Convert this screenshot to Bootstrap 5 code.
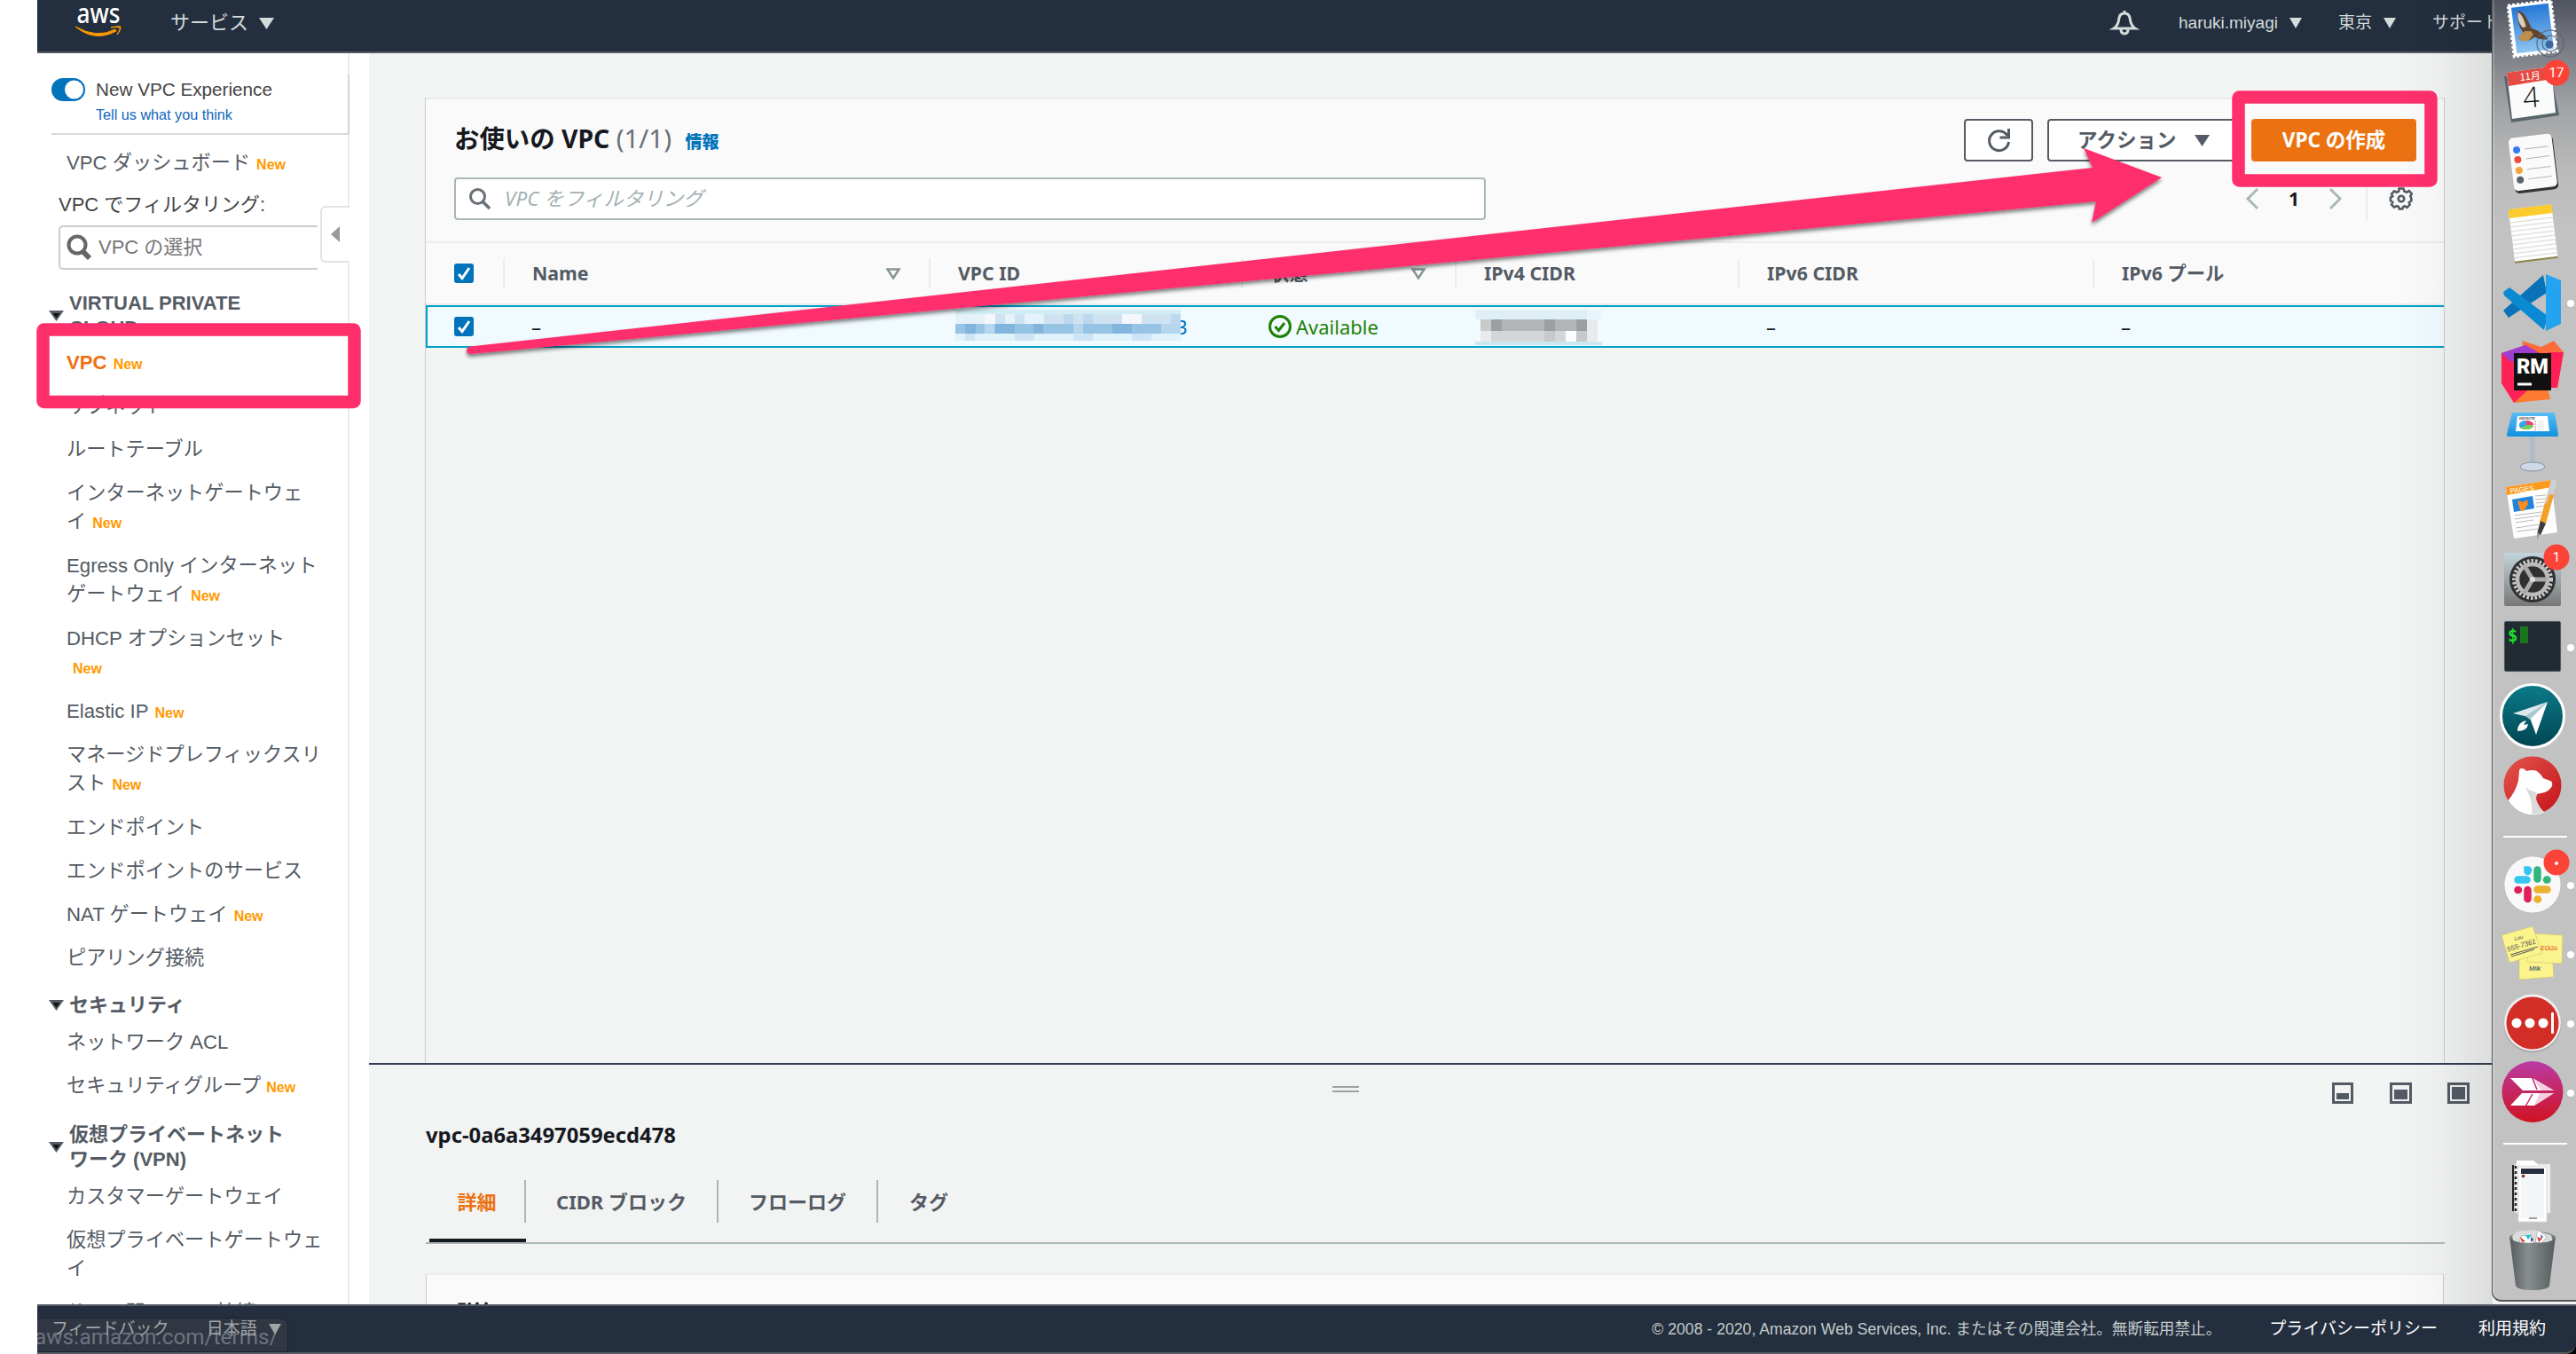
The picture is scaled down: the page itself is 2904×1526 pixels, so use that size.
<!DOCTYPE html>
<html lang="ja">
<head>
<meta charset="utf-8">
<title>VPC</title>
<link href="https://cdn.jsdelivr.net/npm/bootstrap@5.3.0/dist/css/bootstrap.min.css" rel="stylesheet">
<script src="https://cdn.jsdelivr.net/npm/bootstrap@5.3.0/dist/js/bootstrap.bundle.min.js"></script>
<style>
html,body{width:2904px;height:1526px;overflow:hidden;margin:0;background:#fff}
body{font-family:"Liberation Sans","Noto Sans CJK JP",sans-serif;font-size:22px;line-height:32px;color:#545b64;position:relative}
svg{display:block;flex:none;overflow:visible}
a{text-decoration:none;color:inherit}
.shell{height:1526px;padding-left:42px}
.topbar{height:60px;background:#232f3e;border-bottom:2px solid #545b64;color:#d5dbdb;padding:0 0 6px 44px;flex:none}
.topbar span{white-space:nowrap}
.side{width:374px;background:#fff;flex:none;overflow:hidden}
.side-in{width:352px;height:1410px;border-right:2px solid #eaeded;padding-left:13px;position:relative}
.exp{height:92px;margin-left:3px;border-bottom:2px solid #d9d9d9;padding-top:26px}
.exp-edge{position:absolute;right:-2px;top:24px;width:2px;height:68px;background:#d5d5d5}
.exp-name{font-size:20.7px;line-height:30px;color:#444}
.exp-link{font-size:16.2px;line-height:24px;color:#1166bb;padding-left:50px;margin-top:1px}
.exp svg{margin-right:12px}
.item{padding-left:20px;margin-bottom:17px;white-space:nowrap;font-size:22.2px}
.item.two{margin-bottom:18px}
.nw{font-size:16px;line-height:1;font-weight:700;color:#f90;margin-left:7px}
.nw.tight{margin-left:6px}
.item.on{color:#ec7211;font-weight:700}
.flt{padding-left:11px;color:#444;margin-top:15px}
.pick{margin:6.5px 0 0 11px;width:292px;height:50px;border:2px solid #ccc;border-right:0;border-radius:5px 0 0 5px;padding-left:7px;color:#757575;background:#fff}
.pick svg{margin-right:7px}
.handle{position:absolute;left:319px;top:172px;width:33px;height:64px;border:2px solid #e3e3e3;border-right:0;border-radius:6px 0 0 6px;background:#fff;padding-left:10px}
.grp{font-weight:700;line-height:28px;gap:6px;margin-bottom:12px}
.main{background:#f2f3f3;padding-left:63px;padding-right:148px;font-family:"Noto Sans","Noto Sans CJK JP",sans-serif}
.listpane{height:1088px;margin-top:50px;border:solid #c9cdcd;border-width:0 1px;flex:none}
.phead{background:#fafafa;border-top:2px solid #eaeded;border-bottom:2px solid #eaeded;height:164px;padding:22px 31px 0 32px}
.ttl{font-size:28.4px;font-weight:700;color:#16191f}
.ttl i{font-style:normal;font-weight:400;color:#687078;font-size:29.5px}
.ttl b{font-size:19px;color:#0073bb;margin-left:8px}
.bt{height:48px;border:2px solid #545b64;border-radius:4px;background:#fff;font-weight:700;padding:0}
.bt.re{width:78px;margin-right:16px}
.bt.ac{width:215px;padding-left:32px;margin-right:15px}
.bt.go{width:186px;background:#ec7211;border-color:#ec7211;color:#fff}
.find{width:1163px;height:48px;border:2px solid #aab7b8;border-radius:4px;background:#fff;font-style:italic;color:#a3b1b3;padding-left:15px;font-size:22.5px}
.find svg{margin-right:16px}
.vgrid{table-layout:fixed;border-collapse:separate;border-spacing:0;width:100%}
.vgrid th{height:70px;padding:0;background:#fafafa;border-bottom:2px solid #eaeded;color:#545b64;vertical-align:middle;font-size:21.3px}
.vgrid th>div{height:34px;border-left:2px solid #eaeded;padding-left:31px}
.vgrid th:first-child>div{border:0;padding-left:32px}
.vgrid td{height:48px;padding:0 0 1px 32px;background:#f1faff;border:solid #00a1c9;border-width:2px 0;vertical-align:middle;color:#16191f}
.vgrid td:first-child{border-left-width:2px;padding-left:30px}
.split{margin:0 -148px 0 -63px;border-top:2px solid #333f50;padding:0 148px 0 64px;height:272px;overflow:hidden;flex:none;position:relative}
.grip{width:30px;height:7px;border:solid #9aa2a6;border-width:2px 0;margin:24px 0 0 1022px}
.sizes{position:absolute;left:2213px;top:20px;gap:40px}
.vid{font-size:23.8px;font-weight:700;color:#16191f;margin-top:32px}
.tabbar{height:74px;margin-top:33px;border-bottom:2px solid #aab7b8;padding-left:4px;font-weight:700;width:2276px}
.tabbar .tb{height:72px;border-bottom:4px solid transparent}
.tabbar .tb>div{height:48px;display:flex;align-items:center;justify-content:center;border-right:2px solid #aab7b8;margin-top:2px;padding-bottom:1px}
.tabbar .tb.on{color:#ec7211;border-bottom-color:#16191f}
.tabbar .tb:last-child>div{border:0}
.dcard{margin:33px 0 0 0;width:2275px;height:100px;background:#fafafa;border:1px solid #c9cdcd;border-top:2px solid #eaeded;padding:24px 33px;font-size:28px;line-height:40px;font-weight:700;color:#16191f}
.foot{height:56px;background:#232f3e;border:solid #545b64;border-width:2px 0;color:#fff;flex:none;position:relative;border-radius:0 0 12px 0;font-size:19px;padding-left:16px}
.foot>span,.foot>svg{position:relative;z-index:1}
.corner{position:absolute;right:0;bottom:0;width:14px;height:14px;background:#000}
.stat{position:absolute;left:0;top:13px;width:283px;height:39px;background:rgba(58,60,72,.6);border:1px solid #1b2431;border-left:0;border-radius:0 9px 0 0;overflow:hidden;color:#6d7480;font-size:24.3px;line-height:42px;white-space:nowrap;font-family:Roboto,sans-serif}
.stat span{margin-left:-3px}
.dshade{position:absolute;left:2700px;top:0;width:110px;height:1470px;background:linear-gradient(90deg,rgba(0,0,0,0),rgba(0,0,0,.02) 40%,rgba(0,0,0,.09))}
.dockbar{position:absolute;left:2809px;top:0;width:95px;height:1467px;border:1px solid #55595b;border-width:0 0 2px 1px;border-radius:0 0 0 11px;background:linear-gradient(#50545f,#7d8087 60px,#a2a4a6 125px,#bababa 190px,#c2c2c2 260px);box-shadow:inset 2px 0 0 rgba(255,255,255,.18)}
.under{position:absolute;left:2819px;top:1467px;width:85px;height:3px;background:#f4f4f4}
.anno{position:absolute;left:0;top:0;pointer-events:none}
</style>
</head>
<body>
<svg width="0" height="0" class="position-absolute"><defs>
<g id="ck"><rect width="22" height="22" rx="3" fill="#0073bb"/><path d="M5 12l4 4.500 8-11.500" fill="none" stroke="#fff" stroke-width="3"/></g>
<g id="fold"><path d="M0 0h17l-8.500 12z" fill="#545b64"/><path d="M4.500 3h8l-4 5.500z" fill="#111"/></g>
<linearGradient id="gs" x2="0" y2="1"><stop stop-color="#b93ba5"/><stop offset="1" stop-color="#d0121f"/></linearGradient>
<linearGradient id="gp" x2="0" y2="1"><stop stop-color="#0b7c89"/><stop offset="1" stop-color="#024451"/></linearGradient>
<linearGradient id="gb" x2="1" y2="1"><stop stop-color="#e4544b"/><stop offset="1" stop-color="#c4131b"/></linearGradient>
<linearGradient id="gy" x2="0" y2="1"><stop stop-color="#2477d6"/><stop offset="1" stop-color="#8fc4ef"/></linearGradient>
<linearGradient id="gt"><stop stop-color="#555a5c"/><stop offset=".4" stop-color="#888f91"/><stop offset="1" stop-color="#565b5d"/></linearGradient>
<linearGradient id="gr" x2="0" y2="1"><stop stop-color="#c3d5dd"/><stop offset="1" stop-color="#777"/></linearGradient>
<linearGradient id="gk" x2="0" y2="1"><stop stop-color="#58bdf5"/><stop offset="1" stop-color="#1390dd"/></linearGradient>
<filter id="sh" x="-10%" y="-10%" width="120%" height="130%"><feDropShadow dx="0" dy="3" stdDeviation="2" flood-opacity=".5"/></filter>
</defs></svg>

<div class="shell d-flex flex-column">
  <header class="topbar d-flex align-items-center">
    <svg width="52" height="38" viewBox="86 8 52 38"><text x="86.500" y="27" font-family="Noto Sans" font-weight="500" font-size="30" textLength="49" lengthAdjust="spacingAndGlyphs" fill="#fff">aws</text><path d="M85 31q24 14 45 3l1 2q-24 13-46-5z" fill="#f90" stroke="#f90"/><path d="M125 32q9-2 11-1q0 5-4 9q4-7 3-8q-3-1-10 0z" fill="#f90" stroke="#f90"/></svg>
    <span style="margin-left:54px">サービス</span>
    <svg width="17" height="13" style="margin-left:12px"><path d="M0 0h17l-8.500 13z" fill="#d5dbdb"/></svg>
    <svg width="28" height="28" viewBox="0 0 28 28" style="margin-left:2072px"><path d="M2 20q5-3 6-12q1-5 6-5t6 5q1 9 6 12zM14 0v3M10 21q0 5 4 5t4-5" fill="none" stroke="#d5dbdb" stroke-width="3"/></svg>
    <span style="margin-left:47px;font-size:19px">haruki.miyagi</span>
    <svg style="margin-left:13px" width="14" height="12"><path d="M0 0h14l-7 12z" fill="#d5dbdb"/></svg>
    <span style="margin-left:41px;font-size:19px">東京</span>
    <svg style="margin-left:13px" width="14" height="12"><path d="M0 0h14l-7 12z" fill="#d5dbdb"/></svg>
    <span style="margin-left:41px;font-size:19px">サポート</span>
  </header>

  <div class="d-flex flex-grow-1" style="height:1410px">
    <nav class="side"><div class="side-in">
      <div class="exp"><div class="d-flex align-items-center exp-name"><svg width="38" height="26" viewBox="0 0 38 26"><rect width="38" height="26" rx="13" fill="#0073bb"/><circle cx="25.500" cy="13" r="10.500" fill="#fff"/></svg>New VPC Experience</div><div class="exp-link">Tell us what you think</div></div>
      <div class="exp-edge"></div>
      <div class="item" style="margin:16px 0 0">VPC ダッシュボード<span class="nw">New</span></div>
      <div class="flt">VPC でフィルタリング:</div>
      <div class="pick d-flex align-items-center"><svg width="29" height="30" viewBox="0 0 29 30"><circle cx="12" cy="12" r="9.500" fill="none" stroke="#666" stroke-width="4"/><path d="M18 19l8 8" stroke="#666" stroke-width="6"/></svg>VPC の選択</div>
      <div class="handle d-flex align-items-center"><svg width="10" height="18"><path d="M10 0v18l-10-9z" fill="#999"/></svg></div>

      <div class="grp d-flex align-items-center" style="margin-top:24px;margin-bottom:9px"><svg width="17" height="12"><use href="#fold"/></svg><div>VIRTUAL PRIVATE<br>CLOUD</div></div>
      <div class="item on">VPC<span class="nw">New</span></div>
      <div class="item">サブネット</div>
      <div class="item">ルートテーブル</div>
      <div class="item two">インターネットゲートウェ<br>イ<span class="nw">New</span></div>
      <div class="item two">Egress Only インターネット<br>ゲートウェイ<span class="nw">New</span></div>
      <div class="item two">DHCP オプションセット<br><span class="nw">New</span></div>
      <div class="item">Elastic IP<span class="nw">New</span></div>
      <div class="item two">マネージドプレフィックスリ<br>スト<span class="nw">New</span></div>
      <div class="item">エンドポイント</div>
      <div class="item">エンドポイントのサービス</div>
      <div class="item">NAT ゲートウェイ<span class="nw">New</span></div>
      <div class="item">ピアリング接続</div>
      <div class="grp d-flex align-items-center" style="margin-top:23px"><svg width="17" height="12"><use href="#fold"/></svg><div>セキュリティ</div></div>
      <div class="item">ネットワーク ACL</div>
      <div class="item">セキュリティグループ<span class="nw tight">New</span></div>
      <div class="grp d-flex align-items-center" style="margin-top:25px"><svg width="17" height="12"><use href="#fold"/></svg><div>仮想プライベートネット<br>ワーク (VPN)</div></div>
      <div class="item">カスタマーゲートウェイ</div>
      <div class="item two">仮想プライベートゲートウェ<br>イ</div>
      <div class="item">サイト間の VPN 接続</div>
    </div></nav>

    <main class="main flex-grow-1 d-flex flex-column">
      <section class="listpane">
        <div class="phead">
          <div class="d-flex align-items-center justify-content-between">
            <div class="ttl">お使いの VPC <i>(1/1)</i> <b>情報</b></div>
            <div class="d-flex">
              <button class="btn bt re d-flex align-items-center justify-content-center"><svg width="26" height="26" viewBox="0 0 26 26"><path d="M23 8a11 11 0 1 0 1.500 7" fill="none" stroke="#545b64" stroke-width="3"/><path d="M24.500 0v10h-10" fill="none" stroke="#545b64" stroke-width="3"/></svg></button>
              <button class="btn bt ac d-flex align-items-center"><span style="color:#545b64;font-size:22.500px">アクション</span><svg style="margin-left:21px" width="17" height="13"><path d="M0 0h17l-8.500 13z" fill="#545b64"/></svg></button>
              <button class="btn bt go"><span style="font-size:22.500px">VPC の作成</span></button>
            </div>
          </div>
          <div class="d-flex align-items-center justify-content-between" style="margin-top:18px">
            <div class="find d-flex align-items-center"><svg width="24" height="24" viewBox="0 0 24 24"><circle cx="9.500" cy="9.500" r="8" fill="none" stroke="#687078" stroke-width="3"/><path d="M15.500 15.500l7.500 7.500" stroke="#687078" stroke-width="3.500"/></svg>VPC をフィルタリング</div>
            <div class="d-flex align-items-center" style="margin-right:4px;color:#16191f;font-weight:700;font-size:21px">
              <svg width="14" height="24"><path d="M13 1l-11 11 11 11" fill="none" stroke="#aab7b8" stroke-width="3"/></svg><span style="margin:0 34px">1</span><svg width="14" height="24"><path d="M1 1l11 11-11 11" fill="none" stroke="#aab7b8" stroke-width="3"/></svg>
              <div style="width:2px;height:48px;background:#eaeded;margin:0 25px 0 27px"></div>
              <svg width="26" height="26" viewBox="-13 -13 26 26"><path d="M-2.500-11.500h5l.8 3 2.800 1.200 2.700-1.500 3 3.200-1.500 2.700 1 2.400v3l-2.500 1.500.8 2.600-3 3.200-2.700-1.500-1.800.8-.8 2.400h-3.500l-.8-2.400-2.300-.9-2.700 1.500-3-3.200 1.300-2.600-2.400-1.700v-3.500l2.400-1.500-1.300-2.600 3-3.300 2.700 1.400 2.500-1z" fill="none" stroke="#545b64" stroke-width="2.600"/><circle r="3.300" fill="none" stroke="#545b64" stroke-width="2.600"/></svg>
            </div>
          </div>
        </div>
        <table class="vgrid">
          <colgroup><col style="width:87px"><col style="width:480px"><col style="width:352px"><col style="width:241px"><col style="width:319px"><col style="width:400px"><col></colgroup>
          <thead><tr>
            <th><div class="d-flex align-items-center"><svg width="22" height="22"><use href="#ck"/></svg></div></th>
            <th><div class="d-flex align-items-center justify-content-between"><span>Name</span><svg width="16" height="13" style="margin-right:32px"><path d="M1.500 1.500h13l-6.500 10z" fill="none" stroke="#879596" stroke-width="2.500"/></svg></div></th>
            <th><div class="d-flex align-items-center justify-content-between"><span>VPC ID</span><svg width="16" height="13" style="margin-right:32px"><path d="M1.500 1.500h13l-6.500 10z" fill="none" stroke="#879596" stroke-width="2.500"/></svg></div></th>
            <th><div class="d-flex align-items-center justify-content-between"><span>状態</span><svg width="16" height="13" style="margin-right:33px"><path d="M1.500 1.500h13l-6.500 10z" fill="none" stroke="#879596" stroke-width="2.500"/></svg></div></th>
            <th><div class="d-flex align-items-center">IPv4 CIDR</div></th>
            <th><div class="d-flex align-items-center">IPv6 CIDR</div></th>
            <th><div class="d-flex align-items-center">IPv6 プール</div></th>
          </tr></thead>
          <tbody><tr>
            <td><svg width="22" height="22"><use href="#ck"/></svg></td>
            <td>–</td>
            <td><div class="position-relative" style="height:32px;margin-left:-2px"><span class="position-absolute" style="left:249px;color:#0073bb">3</span>
              <svg class="position-absolute" style="left:0;top:-3px" width="254" height="36" shape-rendering="crispEdges"><path fill="#d0edf4" d="M0 0h254v5H0z"/><path fill="#e6f2fa" d="M0 5h254v11H0z"/><path fill="#cfe2f2" d="M45 5h11v11H45zM67 5h11v11H67zM100 5h88v11h-88zM210 5h44v11h-44z"/><path fill="#bcd8ee" d="M122 5h11v11h-11zM144 5h11v11h-11zM243 5h11v11h-11z"/><path fill="#f4f8fd" d="M188 5h22v11h-22zM33 5h12v11H33z"/><path fill="#97c3e4" d="M0 16h254v11H0z"/><path fill="#82b5dd" d="M11 16h12v11H11zM45 16h22v11H45zM88 16h11v11H88zM177 16h22v11h-22z"/><path fill="#b5d6ec" d="M33 16h11v11H33zM133 16h11v11h-11zM232 16h22v11h-22z"/><path fill="#e0f2fa" d="M0 27h254v8H0z"/><path fill="#cde4f4" d="M11 27h11v8H11zM67 27h22v8H67zM133 27h22v8h-22zM199 27h22v8h-22z"/></svg></div></td>
            <td><div class="d-flex align-items-center" style="color:#1d8102;margin-left:-1px"><svg width="26" height="26" viewBox="0 0 26 26" style="margin-right:5px"><circle cx="13" cy="13" r="11.500" fill="none" stroke="#1d8102" stroke-width="3"/><path d="M7.500 13l4 4.500 6.500-8.500" fill="none" stroke="#1d8102" stroke-width="3"/></svg>Available</div></td>
            <td><svg width="143" height="40" style="margin-left:-9px;margin-top:2px" shape-rendering="crispEdges"><path fill="#dff0f5" d="M0 0h126v11H0z"/><path fill="#e6f6fc" d="M126 0h17v11h-17z"/><path fill="#fafcfd" d="M6 11h132v25H6z"/><path fill="#b3b4b8" d="M6 11h120v13H6z"/><path fill="#9b9ea3" d="M18 11h12v13H18zM78 11h12v13H78zM114 11h12v13h-12z"/><path fill="#c8c9cb" d="M6 11h12v13H6z"/><path fill="#d4d6da" d="M18 24h84v12H18z"/><path fill="#c6c8cd" d="M78 24h12v12H78zM114 24h12v12h-12z"/><path fill="#e8ebee" d="M6 24h12v12H6zM126 11h12v25h-12z"/><path fill="#cbe8f1" d="M0 36h143v4H0z"/></svg></td>
            <td>–</td><td>–</td>
          </tr></tbody>
        </table>
      </section>
      <section class="split">
        <div class="grip"></div>
        <div class="sizes d-flex position-absolute">
          <svg width="25" height="24"><path d="M1.500 1.500h21v21h-21z" fill="none" stroke="#545b64" stroke-width="3"/><path d="M5 12h14v7H5z" fill="#545b64"/></svg>
          <svg width="25" height="24"><path d="M1.500 1.500h22v21h-22z" fill="none" stroke="#545b64" stroke-width="3"/><path d="M5 8h15v11H5z" fill="#545b64"/></svg>
          <svg width="25" height="24"><path d="M1.500 1.500h22v21h-22z" fill="none" stroke="#545b64" stroke-width="3"/><path d="M5 5h15v14H5z" fill="#545b64"/></svg>
        </div>
        <div class="vid">vpc-0a6a3497059ecd478</div>
        <div class="tabbar d-flex">
          <div class="tb on" style="width:109px"><div>詳細</div></div>
          <div class="tb" style="width:217px"><div>CIDR ブロック</div></div>
          <div class="tb" style="width:180px"><div>フローログ</div></div>
          <div class="tb" style="width:114px"><div>タグ</div></div>
        </div>
        <div class="dcard">詳細</div>
      </section>
    </main>
  </div>

  <div class="position-relative"><div class="corner"></div>
  <footer class="foot d-flex align-items-center">
    <span style="color:#a0a5a6">フィードバック</span><span style="margin-left:42px;color:#a0a5a6">日本語</span><svg style="margin-left:13px" width="14" height="12"><path d="M0 0h14l-7 12z" fill="#a0a5a6"/></svg>
    <span class="ms-auto" style="color:#c3caca;font-size:17.650px">© 2008 - 2020, Amazon Web Services, Inc. またはその関連会社。無断転用禁止。</span>
    <span style="margin-left:54px">プライバシーポリシー</span><span style="margin:0 34px 0 46px">利用規約</span>
    <div class="stat"><span>aws.amazon.com/terms/</span></div>
  </footer></div>
</div>

<svg class="anno" width="2904" height="1526" viewBox="0 0 2904 1526">
  <path filter="url(#sh)" d="M530 390.500L2359 189l-10-22 88 33-79 51 5-24L531 399q-5 0-5-4t4-4.500z" fill="#ff2f6c"/>
  <rect x="48.500" y="371.500" width="351" height="81.500" rx="1" fill="none" stroke="#ff2f6c" stroke-width="14.500" stroke-linejoin="round"/>
  <rect x="2523.500" y="109.500" width="217" height="94" rx="1" fill="none" stroke="#ff2f6c" stroke-width="14.500" stroke-linejoin="round"/>
</svg>
<div class="dshade"></div>
<div class="under"></div>
<aside class="dockbar d-flex flex-column">
  <svg width="94" height="68" viewBox="0 0 94 68"><g transform="rotate(-7 45 32)"><rect x="20.500" y="3" width="49" height="58" fill="#fff" stroke="#fff" stroke-width="3" stroke-dasharray="3 2"/><rect x="24" y="6" width="42" height="52" fill="url(#gy)"/><path d="M31 10q7 3 10 13l3 9q10 4 17 14-8 1-15-4l-6 3-9-1-3-3 6-5q-7-14-3-26z" fill="#5f4630"/><path d="M31 12q5 3 7 17l-4 1q-6-9-3-18z" fill="#d6cdc0"/><path d="M28 40l8-6 7 1 2 4-6 6-8 0z" fill="#c08f50"/></g><circle cx="65" cy="49" r="15" fill="none" stroke="#56657c" stroke-width="1.500" opacity=".75"/><circle cx="65" cy="49" r="9" fill="none" stroke="#56657c" stroke-width="1.500" opacity=".75"/><circle cx="64" cy="50" r="4.500" fill="#2d5285" opacity=".8"/></svg>
  <svg width="94" height="77" viewBox="0 68 94 77"><path d="M13 86l52-6 10 50-54 8z" fill="#58656c"/><path d="M16 82l50-7 5 52-49 7z" fill="#fbfbfb"/><path d="M16 82l50-7 1 14-49 8z" fill="#e44b45"/><text x="31" y="91" font-family="Noto Sans CJK JP" font-size="11" fill="#fff" transform="rotate(-6 31 91)">11月</text><text x="35" y="121.500" font-family="Open Sans" font-weight="300" font-size="32" fill="#111" transform="rotate(-4 35 121)">4</text><circle cx="72" cy="82" r="14.500" fill="#fc4338"/><text x="72" y="87" text-anchor="middle" font-family="Roboto" font-size="15" fill="#fff">17</text></svg>
  <svg width="94" height="78" viewBox="0 145 94 78"><g transform="rotate(-7 45 184)"><rect x="22" y="155" width="49" height="61" rx="5" fill="#333"/><rect x="21" y="153" width="49" height="60" rx="5" fill="#fafafa"/><g stroke="#b5b5b5"><path d="M38 167h27M38 178h27M38 190h27M38 201h27"/></g><circle cx="29" cy="167" r="4" fill="#3478f6"/><circle cx="29" cy="178" r="4" fill="#eb4d3d"/><circle cx="29" cy="190" r="4" fill="#f2a33c"/><circle cx="29" cy="201" r="4" fill="#5b626a"/></g></svg>
  <svg width="94" height="79" viewBox="0 223 94 79"><g transform="rotate(-7 45 262)"><rect x="21" y="233" width="49" height="61" fill="#8f8348"/><rect x="21" y="233" width="49" height="59" fill="#fdfdfd"/><rect x="21" y="233" width="49" height="10" fill="#fccb2e"/><path d="M21 248h49M21 253h49M21 258h49M21 263h49M21 268h49M21 273h49M21 278h49M21 283h49M21 288h49" stroke="#d6d6d6"/></g></svg>
  <svg width="94" height="78" viewBox="0 302 94 78"><path d="M12 350l45-40 4 20-43 28z" fill="#0a72b8"/><path d="M12 329l7-5 43 32-4 16L13 333z" fill="#0b8ad4"/><path d="M60 309l17 7v49l-17 8z" fill="#24a3f0"/></svg>
  <svg width="94" height="79" viewBox="0 380 94 79"><path d="M33 384l22 7 14-7 11 13-7 40H45z" fill="#fc6b3a"/><path d="M10 398l27-9 20 11-12 45-21 9-14-22z" fill="#ff2157"/><path d="M10 398l27-9 15 9-31 10z" fill="#9c3fd0"/><path d="M24 454l20-18 18 0 3 14z" fill="#fd7b31"/><path d="M80 397l-7 40h-9l-2-40z" fill="#ff1f55"/><rect x="24" y="398" width="42" height="42" fill="#111"/><text x="27" y="421" font-family="Roboto" font-weight="900" font-size="24" textLength="36" lengthAdjust="spacingAndGlyphs" fill="#fff">RM</text><path d="M28 433h16" stroke="#fff" stroke-width="3"/></svg>
  <svg width="94" height="77" viewBox="0 459 94 77"><path d="M42 492h6v36h-6z" fill="#aebdc9"/><ellipse cx="45" cy="526" rx="14" ry="5" fill="#cdd9e4" stroke="#8495a5"/><path d="M22 465h48l4 24-.5 3h-57l-.5-3z" fill="url(#gk)"/><path d="M28 469h34l2 17H26z" fill="#fff"/><text x="30" y="473" font-size="4" font-weight="700" fill="#555" font-family="Liberation Sans" textLength="18">KEYNOTE</text><ellipse cx="38" cy="479" rx="8" ry="5" fill="#9b4fd0"/><path d="M38 479v-5q8 1 8 5z" fill="#f0416b"/><path d="M38 479h8q-1 5-8 5-5 0-7-2z" fill="#6fd35a"/><path d="M38 479v-5q-8 1-8 5 0 2 1 3z" fill="#29a9ee"/><path d="M48 474v11" stroke="#e96d8d" stroke-dasharray="2 1"/><path d="M51 475h7M51 478h7M51 481h7M51 484h7" stroke="#ddd"/></svg>
  <svg width="94" height="76" viewBox="0 536 94 76"><path d="M15 549l51-8 7 59-49 7z" fill="#fdfdfd"/><path d="M15 549l51-8 1 8-51 9z" fill="#fb9a1e"/><text x="20" y="556" font-size="8" font-family="Liberation Sans" fill="#fff" transform="rotate(-7 20 556)">PAGES</text><path d="M22 563l23-4 2 14-23 4z" fill="#1f84dc"/><path d="M28 564l6 2 5-3 1 5-5 8-4-1z" fill="#fb8b1c"/><path d="M48 559l12-1M48 563l12-1M49 567l11-1M49 571l10-1M25 581l30-4M25 585l29-4M26 589l20-3M26 595l27-4M27 599l24-3" stroke="#bbb"/><path d="M66 541q5-1 7 2L60 590l-7-2z" fill="#f3a127"/><path d="M66 541q5-1 7 2l-8 26-6-2z" fill="#c9d2da"/><path d="M69 558l-10 31-5-1 10-31z" fill="#f3a127"/><path d="M54 587l6 3-6 13-4-1z" fill="#3d3d3d"/><path d="M50 600l3 1-3 8z" fill="#8aa0b5"/></svg>
  <svg width="94" height="80" viewBox="0 612 94 80"><rect x="13" y="623" width="64" height="60" rx="2" fill="url(#gr)"/><circle cx="45" cy="653" r="26" fill="#303030"/><circle cx="45" cy="653" r="20.500" fill="none" stroke="#c9c9c9" stroke-width="5" stroke-dasharray="2.500 2"/><circle cx="45" cy="653" r="17" fill="none" stroke="#bbb" stroke-width="4.500"/><path d="M45 653h17M45 653l-9-15M45 653l-9 15" stroke="#a9a9a9" stroke-width="5"/><circle cx="45" cy="653" r="3" fill="#ddd"/><circle cx="72" cy="628" r="14.500" fill="#fc4338"/><text x="72" y="633" text-anchor="middle" font-family="Roboto" font-size="15" fill="#fff">1</text></svg>
  <svg width="94" height="76" viewBox="0 692 94 76"><rect x="13" y="700" width="64" height="57" rx="2" fill="#222b31" stroke="#9db3c0" stroke-width=".7"/><text x="17" y="723" font-family="DejaVu Sans Mono" font-size="19" font-weight="700" fill="#17e32a">$</text><rect x="31" y="706" width="9" height="19" fill="#19761f"/></svg>
  <svg width="94" height="78" viewBox="0 768 94 78"><circle cx="45" cy="807" r="35.500" fill="url(#gp)" stroke="#fff" stroke-width="3"/><path d="M23 804l39-13-20 17-6-1z" fill="#dce9ec"/><path d="M62 791l-13 37-7-19z" fill="#fff"/><path d="M62 791l-25 16 5 4z" fill="#a5c7cd"/><path d="M28 824q0-10 10-12l-3 5 5-1q-1 8-12 8z" fill="#fff"/></svg>
  <svg width="94" height="78" viewBox="0 846 94 78"><circle cx="45" cy="885" r="32.500" fill="url(#gb)"/><path d="M17.500 902q8-9 11.500-22l1-11q0-3 3-3 3 0 5 3 7-2 12 0 4 3 7 8l8 3q3 1 2 6-3 5-8 7-5 1-9 2-2 5 0 9 3 7 8 11.800A32.500 32.500 0 0 1 17.500 902z" fill="#fff"/><path d="M33 882q4 8 14 10l3 2q-2 5 0 10 3 7 8 10.800-6 3-14 2.700 2-19-11-35.500z" fill="#dadada"/></svg>
  <div style="height:28px;padding:18px 0 0 12px"><div style="width:72px;height:2px;background:#fff"></div></div>
  <svg width="94" height="84" viewBox="0 952 94 84"><circle cx="45" cy="997" r="32" fill="#f8f8f8" stroke="#aaa" stroke-width=".5"/><g stroke-width="8.500" stroke-linecap="round"><path d="M28.500 991.500h10M40 980.500h-.5v1.500" stroke="#36c5f0"/><path d="M50.500 980.500v10M61 991.500h.5" stroke="#2eb67d"/><path d="M39.500 1003v10M28.500 1003h.5" stroke="#e01e5a"/><path d="M50.500 1002.500h11M50.500 1013.500h.5" stroke="#ecb22e"/></g><circle cx="72" cy="972" r="14.500" fill="#fc4338"/><circle cx="72" cy="973" r="2" fill="#fff"/></svg>
  <svg width="94" height="76" viewBox="0 1036 94 76"><path d="M30 1072h37l2 29-39 3z" fill="#fbf38c" stroke="#c9c26d" stroke-width=".6"/><path d="M45 1052l34 2-1 32-39-2z" fill="#fbf38c" stroke="#c9c26d" stroke-width=".6"/><path d="M10 1054l35-10 11 30-37 11z" fill="#fbf38c" stroke="#c9c26d" stroke-width=".6"/><g font-family="Liberation Sans" font-style="italic"><text x="25" y="1060" font-size="6" fill="#555" transform="rotate(-14 25 1060)">Lou</text><text x="17" y="1073" font-size="8" fill="#555" transform="rotate(-17 17 1073)">555-7361</text><text x="54" y="1071" font-size="7" fill="#e33a20">EGGs</text><text x="41" y="1094" font-size="7.500" fill="#1c3768">Milk</text></g><path d="M20 1076l31-9M21 1078l26-8" stroke="#555"/></svg>
  <svg width="94" height="80" viewBox="0 1112 94 80"><circle cx="45" cy="1154" r="32.500" fill="#a9a9a9"/><circle cx="45" cy="1152.500" r="32" fill="#eee"/><circle cx="45" cy="1153" r="29.500" fill="#d32d27"/><g fill="#fff"><circle cx="27" cy="1153" r="5.500"/><circle cx="42" cy="1153" r="5.500"/><circle cx="57" cy="1153" r="5.500"/><rect x="66" y="1141" width="3" height="24" rx="1"/></g></svg>
  <svg width="94" height="78" viewBox="0 1192 94 78"><circle cx="45" cy="1230.500" r="34.500" fill="url(#gs)"/><path d="M20 1215h25l24 14H34z" fill="#fff"/><path d="M20 1246l13-14h36l-22 14z" fill="#fff"/><path d="M45 1215l24 14h-14zM47 1246l22-14H53z" fill="#f5cfe0"/><path d="M44 1213l6 15M37 1247l8-14" stroke="#c92768" stroke-width="1.500"/></svg>
  <div style="height:30px;padding:18px 0 0 12px"><div style="width:72px;height:2px;background:#fff"></div></div>
  <svg width="94" height="80" viewBox="0 1300 94 80"><path d="M25 1312h40v55H25z" fill="#f3f3f3" stroke="#d5d5d5"/><path d="M27 1308h19l6 5H27z" fill="#fff"/><path d="M23 1313v52" stroke="#222" stroke-width="2"/><path d="M26 1314v51" stroke="#222" stroke-width="2.500" stroke-dasharray="3 3"/><path d="M29 1315h32v62H29z" fill="#fff" stroke="#d8d8d8"/><path d="M32 1318h26v55H32z" fill="#f4f5f8"/><path d="M32 1317h26v6H32z" fill="#262d3f"/><circle cx="34.500" cy="1325.500" r="1.800" fill="#7a2f20"/><path d="M41 1373h9" stroke="#444"/></svg>
  <svg width="94" height="85" viewBox="0 1380 94 85"><path d="M19 1394q6-6 26-6t26 6l-2 8H21z" fill="#777c7e"/><path d="M22 1393q5-7 16-6l8-1 20 6 2 8-44 1z" fill="#d9dcdd"/><path d="M32 1393l12-1 2 9H30zM48 1400l3-14 10 8-6 7z" fill="#fff" stroke="#999" stroke-width=".6"/><path d="M37 1392l7 0-4 5z" fill="#25c3c9"/><path d="M31 1394l6 5-4 1zM50 1394l6 2-4 4z" fill="#d44a35"/><path d="M43 1394l3 3-3 3zM54 1391l3 3-2 2z" fill="#394f9c"/><path d="M19 1393q1 8 26 8t26-8l-7 56q-2 5-19 5t-19-5z" fill="url(#gt)"/></svg>
</aside>
<svg class="anno" width="2904" height="1526"><g fill="#fff"><circle cx="2898" cy="342" r="4"/><circle cx="2898" cy="730" r="4"/><circle cx="2898" cy="998" r="4"/><circle cx="2898" cy="1076" r="4"/><circle cx="2898" cy="1154" r="4"/><circle cx="2898" cy="1232" r="4"/></g></svg>
</body>
</html>
